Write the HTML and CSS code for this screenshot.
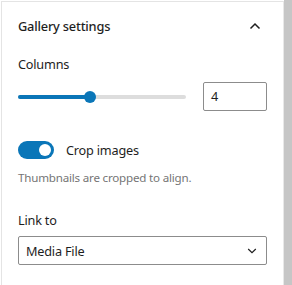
FILE: index.html
```html
<!DOCTYPE html>
<html lang="en">
<head>
<meta charset="utf-8">
<title>Gallery settings</title>
<link rel="stylesheet" href="styles.css">
</head>
<body>
<div class="window">
  <div class="panel">
    <div class="panel-header">
      <h2 class="panel-title">Gallery settings</h2>
      <svg class="chevron-up" width="24" height="24" viewBox="0 0 24 24" aria-hidden="true"><path d="M7.5 14.5 L12 10 L16.5 14.5" fill="none" stroke="#1e1e1e" stroke-width="1.5"/></svg>
    </div>
    <div class="panel-body">
      <div class="field">
        <label class="label">Columns</label>
        <div class="range-row">
          <div class="range">
            <div class="range-track"></div>
            <div class="range-fill" style="width: 43%"></div>
            <div class="range-thumb" style="left: 43%"></div>
          </div>
          <div class="number-input">4</div>
        </div>
      </div>
      <div class="toggle-row">
        <span class="toggle"><span class="toggle-knob"></span></span>
        <span class="toggle-label">Crop images</span>
      </div>
      <p class="help">Thumbnails are cropped to align.</p>
      <div class="field link-field">
        <label class="label">Link to</label>
        <div class="select">
          <span>Media File</span>
          <svg class="chevron-down" width="10" height="6" viewBox="0 0 10 6" aria-hidden="true"><path d="M1.2 1 L5 4.6 L8.8 1" fill="none" stroke="#1e1e1e" stroke-width="1.2"/></svg>
        </div>
      </div>
    </div>
  </div>
  <div class="scrollbar"></div>
</div>
</body>
</html>
```
FILE: styles.css
```css
html, body {
  margin: 0;
  padding: 0;
  background: #fff;
}
body {
  font-family: "Noto Sans", "Open Sans", sans-serif;
  color: #1e1e1e;
  font-size: 12.7px;
  letter-spacing: -0.2px;
}
.window {
  display: flex;
  height: 285px;
  overflow: hidden;
}
.panel {
  flex: 1;
  margin: 1px 0 0 1px;
  border-left: 1px solid #e4e4e4;
  border-top: 1px solid #e4e4e4;
  border-right: 1px solid #e8e8e8;
  background: #fff;
}
.scrollbar {
  width: 8px;
  background: #c6c6c6;
}
.panel-header {
  display: flex;
  align-items: center;
  justify-content: space-between;
  padding: 12px 16px 0 16px;
}
.panel-title {
  margin: 0;
  font-size: 12.8px;
  font-weight: 500;
  line-height: 24px;
}
.panel-body {
  padding: 16px 16px 0 16px;
}
.label {
  display: block;
  font-size: 12.7px;
  line-height: 20px;
}
.range-row {
  display: flex;
  align-items: center;
  gap: 17px;
  margin-top: 8px;
}
.range {
  position: relative;
  flex: 1;
  height: 29px;
}
.range-track,
.range-fill {
  position: absolute;
  left: 0;
  top: 13px;
  height: 4px;
  border-radius: 2px;
}
.range-track {
  right: 0;
  background: #dddddd;
}
.range-fill {
  background: #0a76b8;
}
.range-thumb {
  position: absolute;
  top: 9px;
  width: 12px;
  height: 12px;
  margin-left: -6px;
  border-radius: 50%;
  background: #0a76b8;
}
.number-input {
  box-sizing: border-box;
  width: 64px;
  height: 29px;
  border: 1px solid #8c8c8c;
  border-radius: 2px;
  padding: 0 7px;
  line-height: 27px;
  font-size: 12.7px;
}
.toggle-row {
  display: flex;
  align-items: center;
  gap: 12px;
  margin-top: 29px;
}
.toggle {
  position: relative;
  box-sizing: border-box;
  width: 36px;
  height: 18px;
  border-radius: 9px;
  background: #0a76b8;
}
.toggle-knob {
  position: absolute;
  right: 3px;
  top: 3px;
  width: 12px;
  height: 12px;
  border-radius: 50%;
  background: #fff;
}
.toggle-label {
  font-size: 12.7px;
  line-height: 20px;
}
.help {
  margin: 10px 0 0 0;
  font-size: 11.6px;
  line-height: 16px;
  color: #757575;
}
.link-field {
  margin-top: 24px;
}
.select {
  display: flex;
  align-items: center;
  justify-content: space-between;
  box-sizing: border-box;
  height: 29px;
  margin-top: 6px;
  border: 1px solid #8c8c8c;
  border-radius: 2px;
  padding: 0 9px 0 7px;
  font-size: 12.7px;
}
```
